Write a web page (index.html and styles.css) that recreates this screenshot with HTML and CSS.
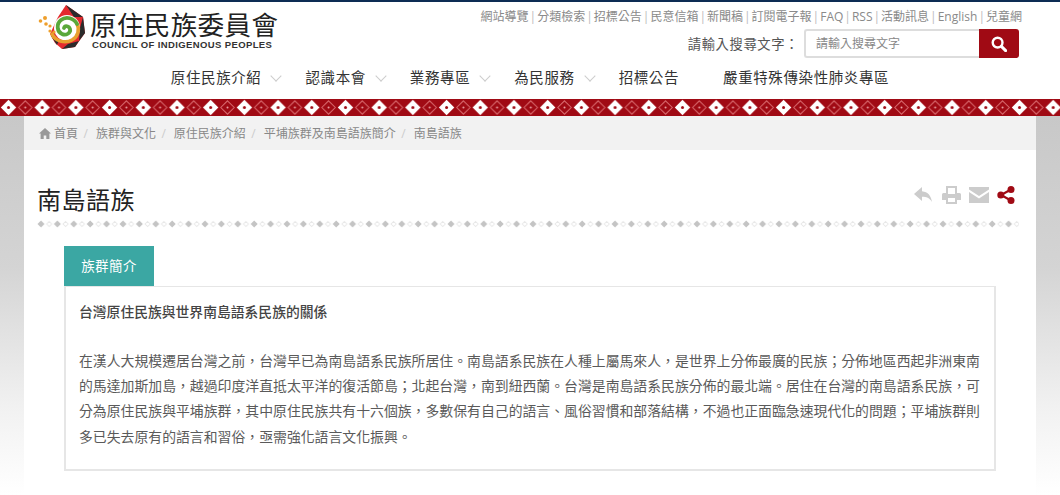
FILE: index.html
```html
<!DOCTYPE html>
<html lang="zh-Hant">

<head>
  <meta charset="UTF-8" />
  <meta name="viewport" content="width=device-width, initial-scale=1.0" />
  <title>南島語族</title>
  <link rel="stylesheet" href="styles.css">
</head>

<body>
  <header class="site-header">
    <div class="header-top">
      <a class="logo" href="#">
        <svg class="logo-mark" width="50" height="48" viewBox="0 0 50 48">
          <!-- star, page offset 38,4 -->
          <polygon points="28,1 20,13 12,30 17,39 24,45 37,43 47,29 45,13" fill="#e42a2e" />
          <polygon points="28,1 45,13 36,13" fill="#2b2b2b" />
          <polygon points="45,13 47,29 41,37 42,24" fill="#2b2b2b" />
          <polygon points="41,37 37,43 24,45 30,40" fill="#2b2b2b" />
          <polygon points="13,32 21,36 19,41" fill="#2b2b2b" />
          <circle cx="29" cy="24" r="13" fill="#fff" />
          <!-- spiral -->
          <path d="M14 30c3 7 13 10 20 6 6-3 8-11 5-16" fill="none" stroke="#e8a02e" stroke-width="3.500" stroke-linecap="round" />
          <path d="M39 20c-3-6-11-8-16-4-5 4-4 12 1 14 4 2 9-1 8-5-1-3-5-4-6-1" fill="none" stroke="#5aa83a" stroke-width="3.800" stroke-linecap="round" />
          <!-- dots -->
          <g fill="#ee9f2c">
            <circle cx="2.500" cy="17" r="1.800" />
            <circle cx="7" cy="14" r="2" />
            <circle cx="8" cy="20" r="1.800" />
            <circle cx="12" cy="22" r="1.600" />
            <circle cx="12" cy="27" r="1.600" />
            <circle cx="16" cy="28" r="1.600" />
          </g>
        </svg>
        <span class="logo-text">
          <span class="logo-title">原住民族委員會</span>
          <span class="logo-en">COUNCIL OF INDIGENOUS PEOPLES</span>
        </span>
      </a>
      <div class="header-tools">
        <ul class="top-links">
          <li><a href="#">網站導覽</a></li>
          <li><a href="#">分類檢索</a></li>
          <li><a href="#">招標公告</a></li>
          <li><a href="#">民意信箱</a></li>
          <li><a href="#">新聞稿</a></li>
          <li><a href="#">訂閱電子報</a></li>
          <li><a href="#">FAQ</a></li>
          <li><a href="#">RSS</a></li>
          <li><a href="#">活動訊息</a></li>
          <li><a href="#">English</a></li>
          <li><a href="#">兒童網</a></li>
        </ul>
        <form class="search">
          <label class="search-label" for="q">請輸入搜尋文字：</label>
          <div class="search-box">
            <input id="q" type="text" placeholder="請輸入搜尋文字" />
            <button type="button" aria-label="搜尋">
              <svg width="16" height="16" viewBox="0 0 16 16">
                <circle cx="6.600" cy="6.600" r="4.900" fill="none" stroke="#fff" stroke-width="2.400" />
                <path d="M10.400 10.400L14.600 14.600" stroke="#fff" stroke-width="3" stroke-linecap="round" />
              </svg>
            </button>
          </div>
        </form>
      </div>
    </div>
    <nav class="main-nav">
      <a href="#" class="has-sub">原住民族介紹</a>
      <a href="#" class="has-sub">認識本會</a>
      <a href="#" class="has-sub">業務專區</a>
      <a href="#" class="has-sub">為民服務</a>
      <a href="#">招標公告</a>
      <a href="#">嚴重特殊傳染性肺炎專區</a>
    </nav>
  </header>

  <svg class="stripe" width="100%" height="17">
    <defs>
      <pattern id="diamonds" width="33.700" height="17" patternUnits="userSpaceOnUse">
        <polygon points="8.500,0.800 16.200,8.500 8.500,16.200 0.800,8.500" fill="#fff" />
        <circle cx="8.500" cy="8.500" r="1.500" fill="#a00a14" />
        <polygon points="25.300,1.800 32,8.500 25.300,15.200 18.600,8.500" fill="none" stroke="#d96a6e" stroke-width="1" />
        <circle cx="25.300" cy="8.500" r="1" fill="#e9a0a2" />
      </pattern>
    </defs>
    <rect width="100%" height="17" fill="#a00a14" />
    <rect width="100%" height="17" fill="url(#diamonds)" />
  </svg>

  <div class="page-bg">
    <main class="content">
      <ol class="breadcrumb">
        <li>
          <svg class="home" width="12" height="11" viewBox="0 0 12 11">
            <path d="M6 0L0 5.400h1.600V11h3.100V7.400h2.600V11h3.100V5.400H12z" fill="#999" />
          </svg>
          <a href="#">首頁</a>
        </li>
        <li><a href="#">族群與文化</a></li>
        <li><a href="#">原住民族介紹</a></li>
        <li><a href="#">平埔族群及南島語族簡介</a></li>
        <li><a href="#">南島語族</a></li>
      </ol>

      <div class="title-row">
        <h1>南島語族</h1>
        <div class="actions">
          <svg width="20" height="18" viewBox="0 0 20 18">
            <path d="M8 1L0 8l8 7v-4.200c4.500 0 7.500 1.200 10 5.200-.7-6-4-10.200-10-10.800z" fill="#ccc" />
          </svg>
          <svg width="19" height="18" viewBox="0 0 19 18">
            <path fill="#ccc" fill-rule="evenodd" d="M4 0h11v7h2.500A1.500 1.500 0 0 1 19 8.500V14h-4v4H4v-4H0V8.500A1.500 1.500 0 0 1 1.500 7H4zM6 2v6h7V2zM6 12v4h7v-4z" />
          </svg>
          <svg width="20" height="16" viewBox="0 0 20 16">
            <path fill="#ccc" d="M0 0h20v2.500L10 9 0 2.500zM0 5l10 6.400L20 5v11H0z" />
          </svg>
          <svg width="18" height="18" viewBox="0 0 18 18">
            <path d="M14 3.500L4 9l10 5.500" fill="none" stroke="#a00a14" stroke-width="2.200" />
            <circle cx="14" cy="3.500" r="3.500" fill="#a00a14" />
            <circle cx="3.800" cy="9" r="3.500" fill="#a00a14" />
            <circle cx="14" cy="14.500" r="3.500" fill="#a00a14" />
          </svg>
        </div>
      </div>

      <svg class="dots" width="100%" height="8">
        <defs>
          <pattern id="dotline" width="16.400" height="8" patternUnits="userSpaceOnUse">
            <polygon points="4,0.500 7.500,4 4,7.500 0.500,4" fill="#c4c4c4" />
            <polygon points="12.200,1.500 14.700,4 12.200,6.500 9.700,4" fill="none" stroke="#e8e8e8" stroke-width="1" />
          </pattern>
        </defs>
        <rect width="100%" height="8" fill="url(#dotline)" />
      </svg>

      <section class="panel">
        <h2 class="tab">族群簡介</h2>
        <div class="panel-body">
          <h3>台灣原住民族與世界南島語系民族的關係</h3>
          <p>在漢人大規模遷居台灣之前，台灣早已為南島語系民族所居住。南島語系民族在人種上屬馬來人，是世界上分佈最廣的民族；分佈地區西起非洲東南的馬達加斯加島，越過印度洋直抵太平洋的復活節島；北起台灣，南到紐西蘭。台灣是南島語系民族分佈的最北端。居住在台灣的南島語系民族，可分為原住民族與平埔族群，其中原住民族共有十六個族，多數保有自己的語言、風俗習慣和部落結構，不過也正面臨急速現代化的問題；平埔族群則多已失去原有的語言和習俗，亟需強化語言文化振興。</p>
        </div>
      </section>
    </main>
  </div>
</body>

</html>
```

FILE: styles.css
```css
* {
  box-sizing: border-box;
}

html,
body {
  height: 495px;
  overflow: hidden;
}

body {
  margin: 0;
  padding: 0;
  font-family: "Open Sans", "Noto Sans CJK TC", sans-serif;
  color: #555;
  background: #fff;
}

a {
  color: inherit;
  text-decoration: none;
}

ul,
ol {
  list-style: none;
  margin: 0;
  padding: 0;
}

/* header */
.site-header {
  height: 99px;
  border-top: 2px solid #0d2c54;
}

.header-top {
  display: flex;
  justify-content: space-between;
  height: 60px;
  padding: 0 38px;
}

.logo {
  display: flex;
  align-items: flex-start;
  padding-top: 2px;
}

.logo-mark {
  margin-right: 2px;
  flex: none;
}

.logo-text {
  display: flex;
  flex-direction: column;
  padding-top: 8px;
}

.logo-title {
  font-size: 26.500px;
  line-height: 26px;
  letter-spacing: 0.4px;
  color: #222;
}

.logo-en {
  margin-top: 1px;
  margin-left: 2px;
  font-family: "Liberation Sans", sans-serif;
  font-size: 9.500px;
  line-height: 11px;
  font-weight: bold;
  letter-spacing: 0.38px;
  color: #333;
}

.header-tools {
  display: flex;
  flex-direction: column;
  align-items: flex-end;
}

.top-links {
  display: flex;
  padding-top: 6px;
  font-size: 12px;
  line-height: 18px;
  color: #8a8a8a;
}

.top-links li + li::before {
  content: "|";
  margin: 0 1px;
  color: #bbb;
}

.search {
  display: flex;
  align-items: center;
  margin-top: 3px;
  margin-right: 3px;
}

.search-label {
  font-size: 13.300px;
  letter-spacing: 0.6px;
  color: #555;
  margin-right: 5px;
}

.search-box {
  display: flex;
  width: 215px;
  height: 29px;
}

.search-box input {
  flex: 1;
  min-width: 0;
  padding: 0 10px;
  border: 2px solid #ddd;
  border-right: 0;
  border-radius: 3px 0 0 3px;
  font-family: inherit;
  font-size: 12px;
  outline: 0;
}

.search-box input::placeholder {
  color: #888;
}

.search-box button {
  display: flex;
  align-items: center;
  justify-content: center;
  width: 40px;
  padding: 0;
  border: 0;
  border-radius: 0 3px 3px 0;
  background: #a00a14;
}

.main-nav {
  display: flex;
  justify-content: center;
  gap: 44px;
  font-size: 14.500px;
  letter-spacing: 0.6px;
  line-height: 32px;
  color: #333;
}

.main-nav a {
  display: flex;
  align-items: center;
}

.has-sub::after {
  content: "";
  width: 7px;
  height: 7px;
  margin: -4px -19px 0 11px;
  border-right: 1px solid #ccc;
  border-bottom: 1px solid #ccc;
  transform: rotate(45deg);
}

.stripe {
  display: block;
}

/* body */
.page-bg {
  height: 379px;
  padding: 0 24px;
  background: linear-gradient(#c8c8c8 0, #d4d4d4 40%, #f2f2f2 78%, #fff 100%);
}

.content {
  height: 100%;
  background: #fff;
}

.breadcrumb {
  display: flex;
  align-items: center;
  height: 34px;
  padding-left: 15px;
  background: #f2f2f2;
  font-size: 12px;
  color: #888;
}

.breadcrumb li {
  display: flex;
  align-items: center;
}

.breadcrumb li + li::before {
  content: "/";
  margin: 0 8px 0 5.500px;
  color: #ccc;
}

.home {
  margin-right: 3px;
}

.title-row {
  display: flex;
  justify-content: space-between;
  align-items: flex-start;
  height: 70px;
  padding: 33px 21px 0 13px;
}

h1 {
  margin: 0;
  font-size: 24px;
  line-height: 34px;
  font-weight: 400;
  letter-spacing: 0.5px;
  color: #222;
}

.actions {
  display: flex;
  align-items: center;
  gap: 8px;
  padding-top: 3px;
}

.dots {
  display: block;
  width: calc(100% - 30px);
  margin-left: 13px;
}

.panel {
  margin: 18px 40px 0;
}

.tab {
  width: 90px;
  height: 40px;
  margin: 0;
  background: #3ba7a3;
  color: #fff;
  font-size: 13.500px;
  font-weight: 400;
  line-height: 40px;
  text-align: center;
  letter-spacing: 0.4px;
}

.panel-body {
  height: 185px;
  padding: 13px 12px 0 13px;
  border: 2px solid #e6e6e6;
  border-top-width: 1px;
}

.panel-body h3 {
  margin: 0;
  font-size: 13.800px;
  line-height: 24px;
  font-weight: 500;
  color: #444;
}

.panel-body p {
  margin: 23.500px 0 0;
  font-size: 13.860px;
  line-height: 25.400px;
  font-weight: 400;
  color: #5a5a5a;
}
```
